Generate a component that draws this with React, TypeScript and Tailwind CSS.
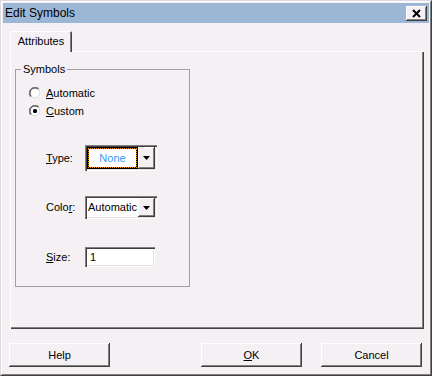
import React from "react";

const raised =
  "shadow-[inset_-1px_-1px_#404040,inset_1px_1px_#ffffff,inset_-2px_-2px_#808080]";
const sunken =
  "shadow-[inset_1px_1px_#808080,inset_2px_2px_#404040,inset_-1px_-1px_#ffffff,inset_-2px_-2px_#e4e0e4]";

function Radio({ checked }: { checked?: boolean }) {
  return (
    <svg width="12" height="12" viewBox="0 0 12 12" className="shrink-0">
      <circle cx="6" cy="6" r="5" fill="#ffffff" />
      <path d="M1.76 10.24 A6 6 0 0 1 10.24 1.76" stroke="#808080" strokeWidth="1" fill="none" />
      <path d="M10.24 1.76 A6 6 0 0 1 1.76 10.24" stroke="#ffffff" strokeWidth="1" fill="none" />
      <path d="M2.46 9.54 A5 5 0 0 1 9.54 2.46" stroke="#404040" strokeWidth="1" fill="none" />
      <path d="M9.54 2.46 A5 5 0 0 1 2.46 9.54" stroke="#d8d4d8" strokeWidth="1" fill="none" />
      {checked && <rect x="4" y="4" width="4" height="4" rx="1.5" fill="#000000" />}
    </svg>
  );
}

function Arrow() {
  return (
    <svg width="7" height="4" viewBox="0 0 7 4">
      <polygon points="0,0 7,0 3.5,4" fill="#000000" />
    </svg>
  );
}

function DropBtn() {
  return (
    <div className={`w-[17px] h-full bg-[#f4f0f4] flex items-center justify-center ${raised}`}>
      <Arrow />
    </div>
  );
}

function Button({ children, className = "" }: { children: React.ReactNode; className?: string }) {
  return (
    <div
      className={`w-[101px] h-[24px] bg-[#f4f0f4] flex items-center justify-center ${raised} ${className}`}
    >
      {children}
    </div>
  );
}

export default function App() {
  return (
    <div className="w-[432px] h-[376px] bg-[#f4f0f4] font-['Liberation_Sans',Arial,sans-serif] text-[11px] leading-[13px] text-black border border-t-[#dcd8dc] border-l-[#dcd8dc] border-r-[#404040] border-b-[#404040]">
      <div className="h-full flex flex-col border border-t-white border-l-white border-r-[#808080] border-b-[#808080] p-[1px]">
        {/* title bar */}
        <div className="h-[20px] shrink-0 bg-[#9cb6d6] flex items-center justify-between pl-[2px] pr-[2px]">
          <span className="text-[12px]">Edit Symbols</span>
          <div className={`w-[21px] h-[15px] bg-[#f4f0f4] flex items-center justify-center ${raised}`}>
            <svg width="9" height="9" viewBox="0 0 9 9">
              <path d="M1 1 L8 8 M8 1 L1 8" stroke="#000000" strokeWidth="2" />
            </svg>
          </div>
        </div>

        {/* tab strip */}
        <div className="mt-[8px] pl-[7px] flex relative z-10">
          <div className="w-[62px] h-[21px] bg-[#f4f0f4] rounded-t-[2px] flex items-center justify-center shadow-[inset_1px_1px_#ffffff,inset_-1px_0_#404040,inset_-2px_0_#808080]">
            Attributes
          </div>
        </div>

        {/* panel */}
        <div className="-mt-[1px] ml-[7px] mr-[5px] h-[278px] pl-[5px] pt-[12px] shadow-[inset_1px_1px_#ffffff,inset_-1px_-1px_#404040,inset_-2px_-2px_#808080]">
          <fieldset className="w-[175px] h-[224px] border border-[#a0a0a0]">
            <legend className="ml-[5px] px-[2px] leading-[13px]">Symbols</legend>
            <div className="flex flex-col mt-[8px]">
              <label className="h-[18px] flex items-center gap-[5px] pl-[13px]">
                <Radio />
                <span>
                  <span className="underline">A</span>utomatic
                </span>
              </label>
              <label className="h-[18px] flex items-center gap-[5px] pl-[13px]">
                <Radio checked />
                <span>
                  <span className="underline">C</span>ustom
                </span>
              </label>

              <div className="mt-[25px] pl-[30px] flex items-center">
                <span className="w-[39px]">
                  <span className="underline">T</span>ype:
                </span>
                <div className={`w-[72px] h-[26px] p-[2px] bg-white flex ${sunken}`}>
                  <div className="flex-1 border border-black">
                    <div className="h-full border border-dotted border-[#ff9a00] bg-black">
                      <div className="h-full bg-white flex items-center justify-center text-[#3399ff]">
                        None
                      </div>
                    </div>
                  </div>
                  <DropBtn />
                </div>
              </div>

              <div className="mt-[25px] pl-[30px] flex items-center">
                <span className="w-[39px]">
                  Colo<span className="underline">r</span>:
                </span>
                <div className={`w-[72px] h-[23px] p-[2px] bg-white flex ${sunken}`}>
                  <div className="flex-1 bg-white flex items-center pl-[1px]">Automatic</div>
                  <DropBtn />
                </div>
              </div>

              <div className="mt-[28px] pl-[30px] flex items-center">
                <span className="w-[39px]">
                  <span className="underline">S</span>ize:
                </span>
                <div className={`w-[70px] h-[20px] bg-white flex items-center pl-[5px] ${sunken}`}>
                  1
                </div>
              </div>
            </div>
          </fieldset>
        </div>

        {/* buttons */}
        <div className="mt-[14px] flex pl-[6px] pr-[7px]">
          <Button>Help</Button>
          <Button className="ml-auto">
            <span>
              <span className="underline">O</span>K
            </span>
          </Button>
          <Button className="ml-[19px]">Cancel</Button>
        </div>
      </div>
    </div>
  );
}
